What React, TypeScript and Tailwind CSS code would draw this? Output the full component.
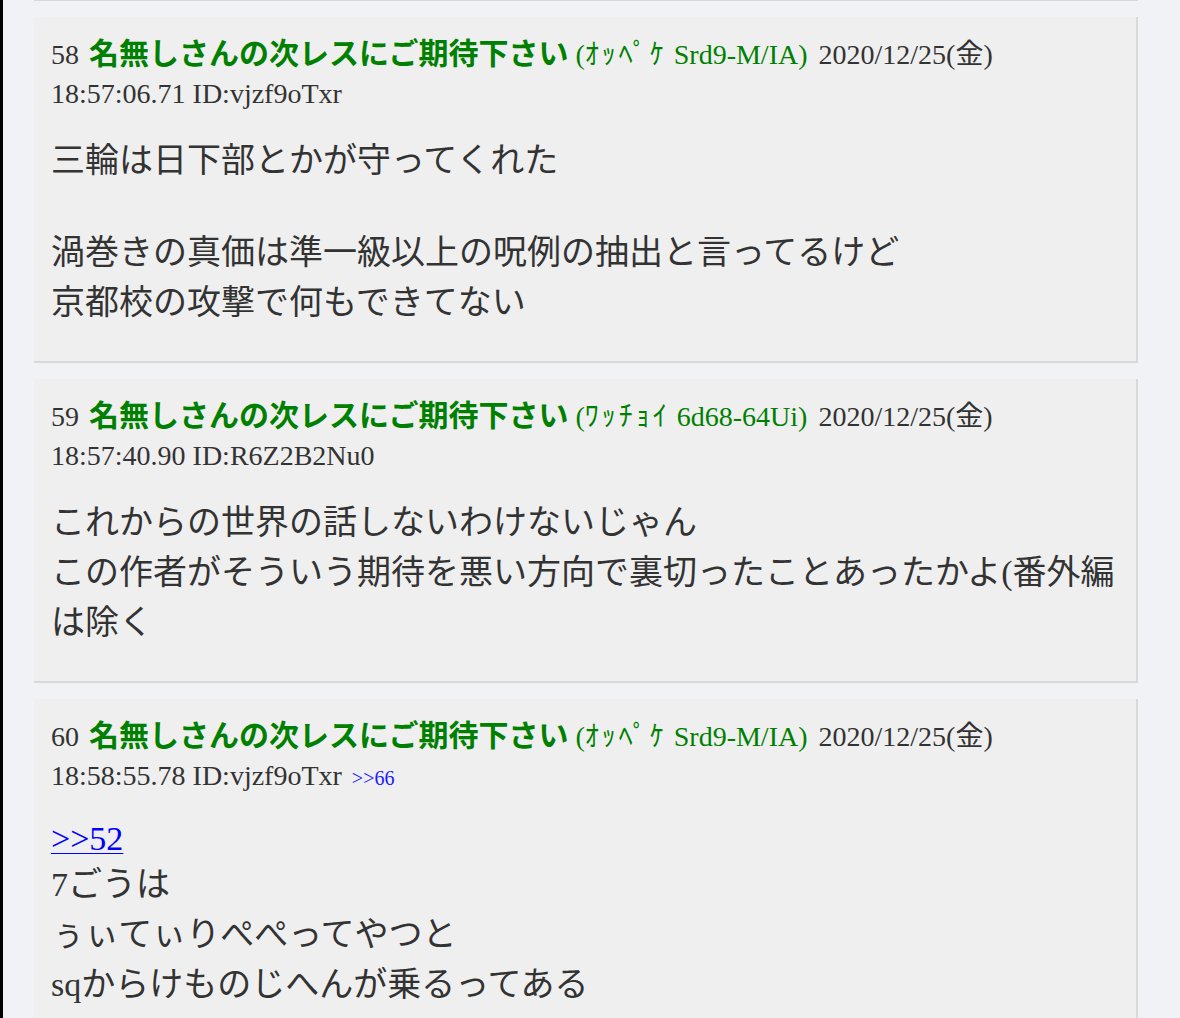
import React from "react";

type Post = {
  no: number;
  kana: string;
  trip: string;
  time: string;
  id: string;
  reply?: string;
  lines: { text: React.ReactNode; kind?: "blank" | "latin" }[];
};

const posts: Post[] = [
  {
    no: 58,
    kana: "ｵｯﾍﾟｹ",
    trip: "Srd9-M/IA",
    time: "18:57:06.71",
    id: "ID:vjzf9oTxr",
    lines: [
      { text: "三輪は日下部とかが守ってくれた" },
      { text: "", kind: "blank" },
      { text: "渦巻きの真価は準一級以上の呪例の抽出と言ってるけど" },
      { text: "京都校の攻撃で何もできてない" },
    ],
  },
  {
    no: 59,
    kana: "ﾜｯﾁｮｲ",
    trip: "6d68-64Ui",
    time: "18:57:40.90",
    id: "ID:R6Z2B2Nu0",
    lines: [
      { text: "これからの世界の話しないわけないじゃん" },
      { text: "この作者がそういう期待を悪い方向で裏切ったことあったかよ(番外編" },
      { text: "は除く" },
    ],
  },
  {
    no: 60,
    kana: "ｵｯﾍﾟｹ",
    trip: "Srd9-M/IA",
    time: "18:58:55.78",
    id: "ID:vjzf9oTxr",
    reply: ">>66",
    lines: [
      {
        text: <a className="text-[#0000ff] underline underline-offset-[3px] decoration-1">&gt;&gt;52</a>,
        kind: "latin",
      },
      { text: "7ごうは" },
      { text: "ぅぃてぃりぺぺってやつと" },
      { text: "sqからけものじへんが乗るってある" },
    ],
  },
];

function PostCard({ p }: { p: Post }) {
  return (
    <div className="bg-[#efefef] border-r-2 border-b-2 border-[#d9d9d9] px-[17px] pt-[18px] pb-[17px]">
      <div className="font-['Liberation_Serif','Noto_Sans_CJK_JP',serif] text-[28px] text-[#333333]">
        <div className="h-[39px] leading-[39px] whitespace-nowrap">
          {p.no}{" "}
          <span className="ml-[3px] font-['Noto_Sans_CJK_JP',sans-serif] font-bold text-[30px] leading-none text-[#008000]">
            名無しさんの次レスにご期待下さい
          </span>{" "}
          <span className="text-[#008000]">
            (<span className="tracking-[3px]">{p.kana}</span> {p.trip})
          </span>{" "}
          <span className="ml-[4px]">2020/12/25(金)</span>
        </div>
        <div className="h-[39px] leading-[39px] whitespace-nowrap">
          {p.time} {p.id}
          {p.reply && (
            <span className="ml-[5px] text-[20px] leading-none text-[#1a1aff]"> {p.reply}</span>
          )}
        </div>
      </div>
      <div className="mt-[23px] mb-[16px] font-['Liberation_Serif','Noto_Sans_CJK_JP',serif] text-[34px] text-[#333333]">
        {p.lines.map((l, i) =>
          l.kind === "blank" ? (
            <div key={i} className="h-[42px]" />
          ) : (
            <div
              key={i}
              className={
                "whitespace-nowrap " +
                (l.kind === "latin" ? "h-[42px] leading-[42px]" : "h-[50px] leading-[50px]")
              }
            >
              {l.text}
            </div>
          )
        )}
      </div>
    </div>
  );
}

export default function App() {
  return (
    <div className="min-h-screen bg-[#f1f2f6] flex">
      <div className="w-[3px] shrink-0 bg-black" />
      <div className="flex-1 pl-[31px] pr-[42px] flex flex-col gap-4">
        <div className="h-px bg-[#d8d8d8]" />
        {posts.map((p) => (
          <PostCard key={p.no} p={p} />
        ))}
      </div>
    </div>
  );
}
